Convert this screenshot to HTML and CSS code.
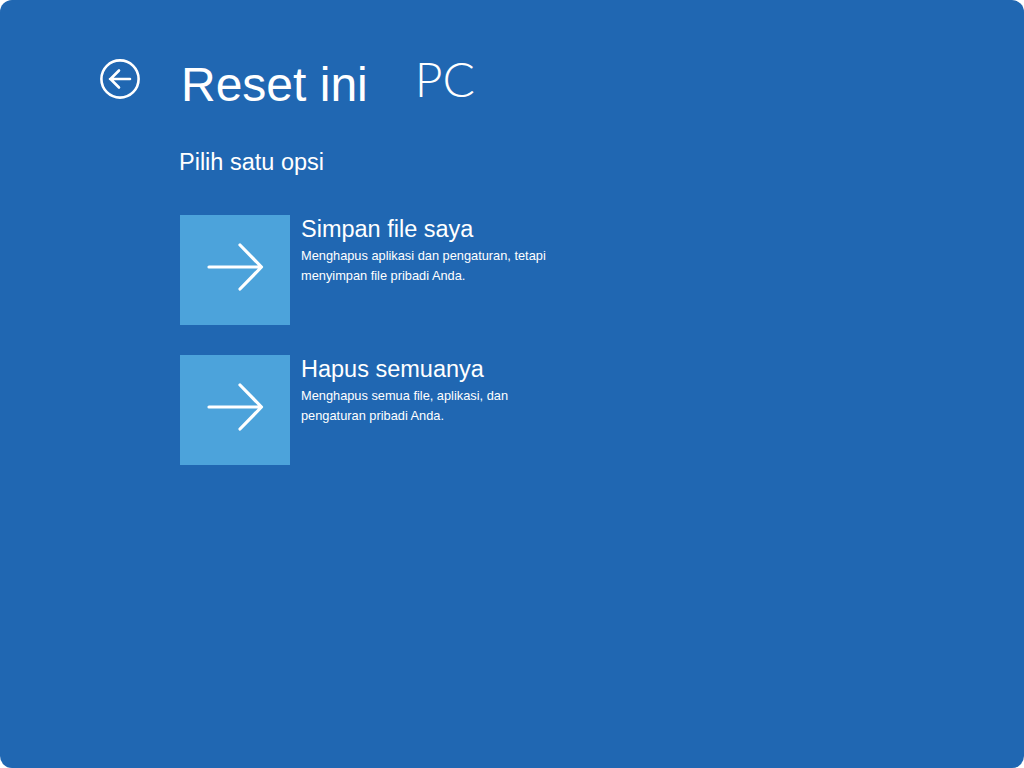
FILE: index.html
```html
<!DOCTYPE html>
<html lang="id">
<head>
<meta charset="utf-8">
<title>Reset ini PC</title>
<link rel="stylesheet" href="styles.css">
</head>
<body>
<div class="screen">
  <header class="header">
    <svg class="back" width="40" height="40" viewBox="0 0 40 40" aria-label="Kembali">
      <circle cx="20" cy="20" r="18.6" fill="none" stroke="#fff" stroke-width="2.6"/>
      <path d="M10 20 H30 M19 11.5 L10.5 20 L19 28.5" fill="none" stroke="#fff" stroke-width="2.6" stroke-linecap="round" stroke-linejoin="round"/>
    </svg>
    <h1 class="title">Reset ini</h1>
    <span class="title-pc">PC</span>
  </header>
  <main class="content">
    <h2 class="subtitle">Pilih satu opsi</h2>
    <div class="options">
      <div class="option">
        <div class="tile">
          <svg width="110" height="110" viewBox="0 0 110 110">
            <path d="M29 52 H81 M60 30 L81.5 52 L60 74" fill="none" stroke="#fff" stroke-width="3.2" stroke-linecap="round" stroke-linejoin="round"/>
          </svg>
        </div>
        <div class="option-text">
          <div class="option-title">Simpan file saya</div>
          <p class="option-desc">Menghapus aplikasi dan pengaturan, tetapi<br>menyimpan file pribadi Anda.</p>
        </div>
      </div>
      <div class="option">
        <div class="tile">
          <svg width="110" height="110" viewBox="0 0 110 110">
            <path d="M29 52 H81 M60 30 L81.5 52 L60 74" fill="none" stroke="#fff" stroke-width="3.2" stroke-linecap="round" stroke-linejoin="round"/>
          </svg>
        </div>
        <div class="option-text">
          <div class="option-title">Hapus semuanya</div>
          <p class="option-desc">Menghapus semua file, aplikasi, dan<br>pengaturan pribadi Anda.</p>
        </div>
      </div>
    </div>
  </main>
</div>
</body>
</html>
```
FILE: styles.css
```css
html, body {
  margin: 0;
  padding: 0;
  background: #ffffff;
}

.screen {
  width: 1024px;
  height: 768px;
  box-sizing: border-box;
  border-radius: 12px;
  background: #2067b2;
  color: #ffffff;
  font-family: "Liberation Sans", Arial, sans-serif;
  padding: 52px 0 0 100px;
  overflow: hidden;
}

.header {
  display: flex;
  align-items: flex-start;
}

.back {
  display: block;
  margin-top: 7px;
  flex: none;
}

.title {
  margin: 9px 0 0 41px;
  font-size: 48px;
  line-height: 48px;
  font-weight: 400;
}

.title-pc {
  margin: 3px 0 0 47px;
  font-family: Lato, "Open Sans", sans-serif;
  font-weight: 300;
  font-size: 48px;
  line-height: 48px;
}

.content {
  padding-left: 79px;
  margin-top: 39px;
}

.subtitle {
  margin: 0;
  font-size: 23.5px;
  line-height: 28px;
  font-weight: 400;
}

.options {
  display: flex;
  flex-direction: column;
  gap: 30px;
  margin-top: 39px;
  padding-left: 1px;
}

.option {
  display: flex;
  align-items: flex-start;
}

.tile {
  width: 110px;
  height: 110px;
  background: #4ca3db;
  flex: none;
}

.tile svg {
  display: block;
}

.option-text {
  margin-left: 11px;
}

.option-title {
  font-size: 23.5px;
  line-height: 28px;
}

.option-desc {
  margin: 3px 0 0;
  font-size: 12.8px;
  line-height: 20px;
}
```
